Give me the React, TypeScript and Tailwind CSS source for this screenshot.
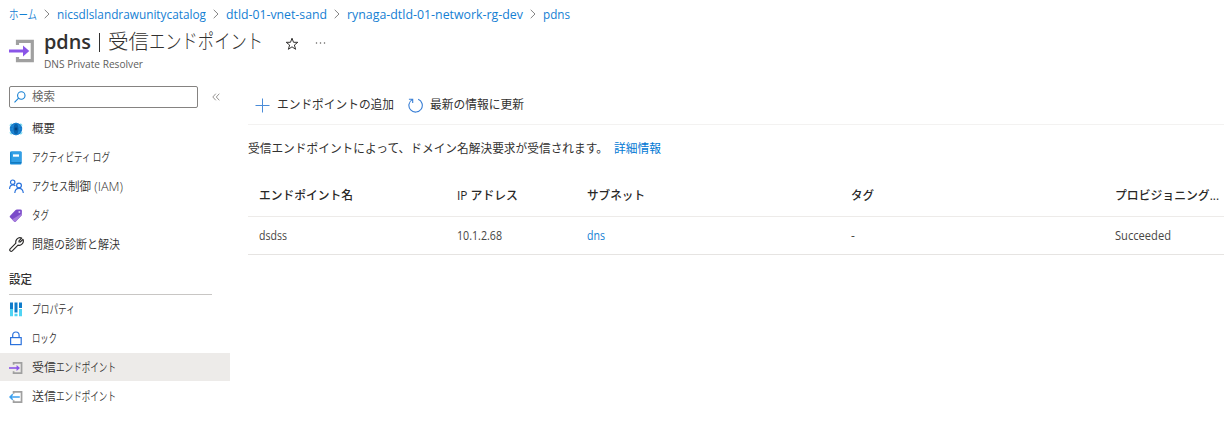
import { useLayoutEffect, useRef } from 'react';
import type { ReactNode } from 'react';

/** A run of text condensed or widened to a set advance width. */
function Fit({ w, children, className = '' }: { w: number; children: ReactNode; className?: string }) {
  const inner = useRef<HTMLSpanElement>(null);
  useLayoutEffect(() => {
    const el = inner.current;
    if (!el) return;
    el.style.transform = 'none';
    el.style.transform = `scaleX(${w / el.getBoundingClientRect().width})`;
  }, [w]);
  return (
    <span className={`inline-block shrink-0 whitespace-nowrap ${className}`} style={{ width: w }}>
      <span ref={inner} className="inline-block origin-left whitespace-nowrap">{children}</span>
    </span>
  );
}

function EndpointIcon({ size, outbound = false }: { size: number; outbound?: boolean }) {
  return (
    <svg width={size} height={size} viewBox="0 0 26 26" fill="none" className="shrink-0">
      <path d="M8.5 7V3.3H23.3V22.7H8.5V19" stroke="#a0a0a0" strokeWidth="3.2" />
      {outbound ? (
        <path d="M20 13H2M7 8L2 13L7 18" stroke="#3ba0ef" strokeWidth="2.8" />
      ) : (
        <>
          <path d="M0 13H16" stroke="#8a55e8" strokeWidth="3" />
          <path d="M14 7.6L20.3 13L14 18.4Z" fill="#8a55e8" />
        </>
      )}
    </svg>
  );
}

function GlobeIcon() {
  return (
    <svg width="14" height="14" viewBox="0 0 14 14">
      <path d="M2.6 1.6L.8 3.6M11.4 1.6L13.2 3.6M.8 10.4L2.6 12.4M13.2 10.4L11.4 12.4" stroke="#6fdcf2" strokeWidth="1.2" />
      <circle cx="7" cy="7" r="6.2" fill="#1478c8" />
      <path d="M1 7H13M2 4H12M2 10H12" stroke="#2a9be6" strokeWidth=".6" />
      <ellipse cx="7" cy="7" rx="3" ry="5.9" fill="#0a62ac" stroke="#2a9be6" strokeWidth=".6" />
      <circle cx="7" cy="7" r="1.4" fill="#06427c" />
    </svg>
  );
}

function LogIcon() {
  return (
    <svg width="14" height="14" viewBox="0 0 14 14">
      <rect x="1" y=".5" width="11.5" height="13" rx="1" fill="#1688d5" />
      <path d="M2.4 .5H12A.7 .7 0 0 1 12.6 1.2V11H2.4Z" fill="#339fe5" />
      <path d="M1.7 11.5H12.5" stroke="#1479bd" />
      <rect x="4" y="3.4" width="6" height="2.3" fill="#fff" />
    </svg>
  );
}

function PeopleIcon() {
  return (
    <svg width="15" height="15" viewBox="0 0 15 15" fill="none" stroke="#2b73dc" strokeWidth="1.2">
      <circle cx="3.7" cy="3.2" r="2.2" />
      <path d="M.6 10C.6 7.2 2.1 5.9 4 5.9C5 5.9 5.8 6.2 6.3 6.8" />
      <circle cx="10" cy="6.5" r="2.4" />
      <path d="M5.8 14C6 11 7.7 9.4 10 9.4S14 11 14.3 14" />
    </svg>
  );
}

function TagIcon() {
  return (
    <svg width="14" height="14" viewBox="0 0 14 14">
      <path d="M.9 6.9L6.6 1Q7 .6 7.8 .6L11.4 .5Q12.8 .5 12.9 1.8L12.8 5.4Q12.8 6.2 12.3 6.7L6.6 12.8Q6 13.4 5.3 12.8L.9 8.3Q.4 7.6 .9 6.9Z" fill="#7b4bc9" />
      <path d="M3 10.5L12.8 4.5V5.4Q12.8 6.2 12.3 6.7L6.6 12.8Q6 13.4 5.3 12.8Z" fill="#a57cdc" />
      <circle cx="10.4" cy="3.1" r="1" fill="#d9c4f4" />
    </svg>
  );
}

function WrenchIcon() {
  return (
    <svg width="15" height="15" viewBox="0 0 15 15" fill="none" stroke="#292827" strokeWidth="1.15" strokeLinejoin="round">
      <path d="M12.7 1.1L10 3.8V5H11.2L13.9 2.3C14.7 4 14.2 6 12.9 7.2C11.8 8.3 10.3 8.5 9 8.1L3.3 13.8C1.8 15.2-.1 13.3 1.2 11.8L6.9 6.1C6.5 4.7 6.8 3.3 7.9 2.1C9.2.8 11.1.4 12.7 1.1Z" />
    </svg>
  );
}

function PropertiesIcon() {
  return (
    <svg width="14" height="15" viewBox="0 0 14 15">
      <path d="M1 .5H4V7H1ZM5.5 .5H8.5V10.5H5.5ZM10 .5H13V6H10Z" fill="#0f7ccb" />
      <path d="M1 7H4V14.3H1ZM5.5 11.8H8.5V14.3H5.5ZM10 7H13V14.3H10Z" fill="#50d4f3" />
    </svg>
  );
}

function LockIcon() {
  return (
    <svg width="14" height="15" viewBox="0 0 14 15" fill="none" stroke="#2c72dc" strokeWidth="1.2">
      <rect x="1.6" y="6.6" width="10.6" height="7" />
      <path d="M3.7 6.5V4.2C3.7 2.2 4.9 1 6.9 1S10.1 2.2 10.1 4.2V6.5" />
    </svg>
  );
}

function Chevron({ className }: { className: string }) {
  return (
    <svg width="6" height="10" viewBox="0 0 6 10" fill="none" className={`shrink-0 ${className}`}>
      <path d="M.7 .8L5 5L.7 9.2" stroke="#858585" />
    </svg>
  );
}

type Part = [string, number];

function NavItem({ icon, parts, active = false }: { icon: ReactNode; parts: Part[]; active?: boolean }) {
  return (
    <a className={`flex h-7 w-[230px] items-center pt-px pl-[9px] ${active ? 'bg-[#edebe9]' : ''}`}>
      <span className="flex w-[23px] shrink-0 items-center">{icon}</span>
      {parts.map(([text, w]) => (
        <Fit key={text} w={w} className="mt-px font-[350]">{text}</Fit>
      ))}
    </a>
  );
}

const columns = 'grid grid-cols-[198px_130px_264px_264px_109px] items-center pl-[11px]';

export default function App() {
  return (
    <div className="h-[424px] w-[1224px] overflow-hidden bg-white font-['Open_Sans','Noto_Sans_CJK_JP',sans-serif] text-[12px] leading-4 text-[#323130]">
      <nav className="flex h-[27px] items-center pl-[9px] text-[13px] text-[#1580d3]">
        <Fit w={28} className="font-[350]">ホーム</Fit>
        <Chevron className="mr-[7px] ml-[7px]" />
        <Fit w={149}>nicsdlslandrawunitycatalog</Fit>
        <Chevron className="mx-[7px]" />
        <Fit w={101}>dtld-01-vnet-sand</Fit>
        <Chevron className="mx-[7px]" />
        <Fit w={176}>rynaga-dtld-01-network-rg-dev</Fit>
        <Chevron className="mx-[7px]" />
        <Fit w={27}>pdns</Fit>
      </nav>

      <header className="flex h-[59px] pl-[9px]">
        <div className="w-[35px] pt-[11px]"><EndpointIcon size={26} /></div>
        <div>
          <h1 className="flex h-[30px] items-center text-[20px] leading-[30px]">
            <Fit w={47} className="font-semibold">pdns</Fit>
            <span className="ml-[8px] h-[19px] w-px bg-[#323130]" />
            <Fit w={41} className="ml-[8px] font-light">受信</Fit>
            <Fit w={114} className="font-light">エンドポイント</Fit>
            <svg width="14" height="14" viewBox="0 0 14 14" className="mt-[3px] ml-[22px]" fill="none" stroke="#323130">
              <path d="M7 1.2L8.5 5.3H12.8L9.4 8L10.6 12.3L7 9.8L3.4 12.3L4.6 8L1.2 5.3H5.5Z" />
            </svg>
            <svg width="12" height="4" viewBox="0 0 12 4" className="mt-[2px] ml-[16px]" fill="#605e5c">
              <circle cx="1.5" cy="2" r=".75" /><circle cx="5.5" cy="2" r=".75" /><circle cx="9.5" cy="2" r=".75" />
            </svg>
          </h1>
          <div className="flex h-3.5 items-center text-[11px] leading-3.5 text-[#605e5c]"><Fit w={99}>DNS Private Resolver</Fit></div>
        </div>
      </header>

      <div className="flex">
        <aside className="w-[248px] shrink-0">
          <div className="flex h-[22px] items-center pl-[9px]">
            <div className="flex h-[22px] w-[189px] items-center rounded-[2px] border border-[#858381] pl-1 text-[#605e5c]">
              <svg width="12" height="12" viewBox="0 0 12 12" fill="none" stroke="#1580d3" strokeWidth="1.1" className="mr-[6px]">
                <circle cx="7.3" cy="4.5" r="3.7" /><path d="M4.6 7.2L.5 11.3" />
              </svg>
              <Fit w={23} className="font-[350]">検索</Fit>
            </div>
            <svg width="8" height="8" viewBox="0 0 8 8" fill="none" stroke="#8a8886" strokeWidth=".9" className="ml-[14px]">
              <path d="M3.8 .7L.8 4L3.8 7.3M7.3 .7L4.3 4L7.3 7.3" />
            </svg>
          </div>
          <div className="mt-[6px] flex flex-col gap-px">
            <NavItem icon={<GlobeIcon />} parts={[['概要', 23]]} />
            <NavItem icon={<LogIcon />} parts={[['アクティビティ ログ', 78]]} />
            <NavItem icon={<PeopleIcon />} parts={[['アクセス', 36], ['制御', 23], ['\u00a0(IAM)', 32]]} />
            <NavItem icon={<TagIcon />} parts={[['タグ', 17]]} />
            <NavItem icon={<WrenchIcon />} parts={[['問題の診断と解決', 88]]} />
          </div>
          <div className="mt-[11px] mr-9 ml-[9px] flex h-[26px] items-center border-b border-[#c8c6c4] pb-[3px] font-medium">
            <Fit w={23}>設定</Fit>
          </div>
          <div className="flex flex-col gap-px">
            <NavItem icon={<PropertiesIcon />} parts={[['プロパティ', 43]]} />
            <NavItem icon={<LockIcon />} parts={[['ロック', 25]]} />
            <NavItem icon={<EndpointIcon size={14} />} parts={[['受信', 24], ['エンドポイント', 60]]} active />
            <NavItem icon={<EndpointIcon size={14} outbound />} parts={[['送信', 24], ['エンドポイント', 60]]} />
          </div>
        </aside>

        <main className="min-w-0 flex-1 overflow-hidden">
          <div className="flex h-[39px] items-center border-b border-[#f3f2f1] pl-[7px]">
            <svg width="15" height="15" viewBox="0 0 15 15" fill="none" stroke="#4b8cd8" className="mr-[7px]">
              <path d="M7.5 .5V14.5M.5 7.5H14.5" />
            </svg>
            <Fit w={117}>エンドポイントの追加</Fit>
            <svg width="15" height="15" viewBox="0 0 15 15" fill="none" stroke="#3a7fd5" strokeWidth="1.1" className="mr-[7px] ml-[14px]">
              <path d="M10.2 1.2A6.7 6.7 0 1 1 4.2 1.6M.9 1.2H4.7V5" />
            </svg>
            <Fit w={94}>最新の情報に更新</Fit>
          </div>
          <p className="flex h-[47px] items-center">
            <Fit w={360}>受信エンドポイントによって、ドメイン名解決要求が受信されます。</Fit>
            <a className="ml-[6px] text-[#0078d4]"><Fit w={47}>詳細情報</Fit></a>
          </p>
          <div className={`${columns} mt-[4px] h-[41px] border-b border-[#edebe9] font-medium text-[#292827]`}>
            <Fit w={94}>エンドポイント名</Fit>
            <Fit w={61}>IP アドレス</Fit>
            <Fit w={58}>サブネット</Fit>
            <Fit w={23}>タグ</Fit>
            <Fit w={104}>プロビジョニング...</Fit>
          </div>
          <div className={`${columns} h-[38px] border-b border-[#e6e4e2] text-[#484644]`}>
            <Fit w={28}>dsdss</Fit>
            <Fit w={45}>10.1.2.68</Fit>
            <a className="text-[#1580d3]"><Fit w={18}>dns</Fit></a>
            <span>-</span>
            <Fit w={56}>Succeeded</Fit>
          </div>
        </main>
      </div>
    </div>
  );
}
